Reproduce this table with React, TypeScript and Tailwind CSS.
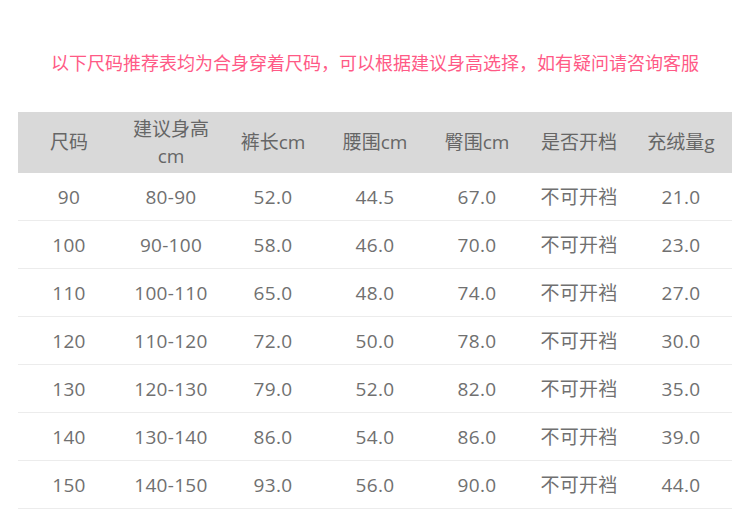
const HEADERS = ["尺码", "建议身高\ncm", "裤长cm", "腰围cm", "臀围cm", "是否开档", "充绒量g"];

const ROWS = [
  ["90", "80-90", "52.0", "44.5", "67.0", "不可开裆", "21.0"],
  ["100", "90-100", "58.0", "46.0", "70.0", "不可开裆", "23.0"],
  ["110", "100-110", "65.0", "48.0", "74.0", "不可开裆", "27.0"],
  ["120", "110-120", "72.0", "50.0", "78.0", "不可开裆", "30.0"],
  ["130", "120-130", "79.0", "52.0", "82.0", "不可开裆", "35.0"],
  ["140", "130-140", "86.0", "54.0", "86.0", "不可开裆", "39.0"],
  ["150", "140-150", "93.0", "56.0", "90.0", "不可开裆", "44.0"]
];

export default function App() {
  return (
    <div className="h-[510px] w-[750px] overflow-hidden bg-white font-['Open_Sans','Noto_Sans_CJK_SC',sans-serif]">
      <p className="pt-[50px] text-center text-[18px] leading-[26px] text-[#ff5a86]">
        以下尺码推荐表均为合身穿着尺码，可以根据建议身高选择，如有疑问请咨询客服
      </p>
      <div className="ml-[18px] mt-[36px] w-[714px]">
        <div className="grid h-[61px] grid-cols-7 items-center bg-[#d9d9d9] text-[19px] leading-[27px] text-[#666]">
          {HEADERS.map((h) => (
            <div key={h} className="whitespace-pre text-center">
              {h}
            </div>
          ))}
        </div>
        {ROWS.map((row) => (
          <div
            key={row[0]}
            className="grid h-[48px] grid-cols-7 items-center border-b border-[#ececec] pt-[2px] text-[19px] tracking-[0.3px] text-[#707070]"
          >
            {row.map((cell, i) => (
              <div key={i} className="text-center">
                {cell}
              </div>
            ))}
          </div>
        ))}
      </div>
    </div>
  );
}
